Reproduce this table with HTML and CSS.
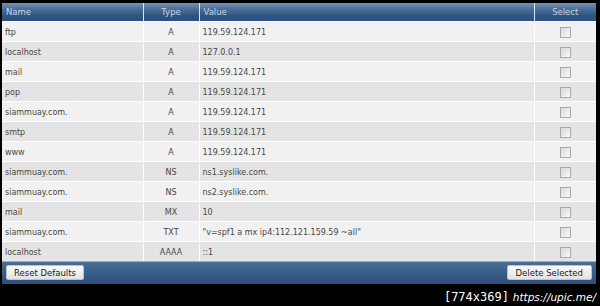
FILE: index.html
```html
<!DOCTYPE html>
<html>
<head>
<meta charset="utf-8">
<link rel="stylesheet" href="styles.css">
</head>
<body>
<div class="frame">
  <table class="dns">
    <colgroup>
      <col class="c-name"><col class="c-type"><col class="c-value"><col class="c-select">
    </colgroup>
    <thead>
      <tr><th class="left">Name</th><th>Type</th><th class="left">Value</th><th>Select</th></tr>
    </thead>
    <tbody>
      <tr><td>ftp</td><td class="ctr">A</td><td>119.59.124.171</td><td class="ctr"><span class="cb"></span></td></tr>
      <tr><td>localhost</td><td class="ctr">A</td><td>127.0.0.1</td><td class="ctr"><span class="cb"></span></td></tr>
      <tr><td>mail</td><td class="ctr">A</td><td>119.59.124.171</td><td class="ctr"><span class="cb"></span></td></tr>
      <tr><td>pop</td><td class="ctr">A</td><td>119.59.124.171</td><td class="ctr"><span class="cb"></span></td></tr>
      <tr><td>siammuay.com.</td><td class="ctr">A</td><td>119.59.124.171</td><td class="ctr"><span class="cb"></span></td></tr>
      <tr><td>smtp</td><td class="ctr">A</td><td>119.59.124.171</td><td class="ctr"><span class="cb"></span></td></tr>
      <tr><td>www</td><td class="ctr">A</td><td>119.59.124.171</td><td class="ctr"><span class="cb"></span></td></tr>
      <tr><td>siammuay.com.</td><td class="ctr">NS</td><td>ns1.syslike.com.</td><td class="ctr"><span class="cb"></span></td></tr>
      <tr><td>siammuay.com.</td><td class="ctr">NS</td><td>ns2.syslike.com.</td><td class="ctr"><span class="cb"></span></td></tr>
      <tr><td>mail</td><td class="ctr">MX</td><td>10</td><td class="ctr"><span class="cb"></span></td></tr>
      <tr><td>siammuay.com.</td><td class="ctr">TXT</td><td>"v=spf1 a mx ip4:112.121.159.59 ~all"</td><td class="ctr"><span class="cb"></span></td></tr>
      <tr><td>localhost</td><td class="ctr">AAAA</td><td>::1</td><td class="ctr"><span class="cb"></span></td></tr>
    </tbody>
  </table>
  <div class="footer">
    <button class="btn">Reset Defaults</button>
    <button class="btn">Delete Selected</button>
  </div>
  <div class="mark"><span class="dim">[774x369]</span> <span class="url">https://upic.me/</span></div>
</div>
</body>
</html>
```
FILE: styles.css
```css
html, body {
  margin: 0;
  padding: 0;
  background: #000;
}
.frame {
  width: 594px;
  padding: 3px 4px 0 2px;
  font-family: "DejaVu Sans", Verdana, sans-serif;
  font-size: 8px;
}
.dns {
  width: 594px;
  border-collapse: collapse;
  table-layout: fixed;
}
.c-name { width: 141px; }
.c-type { width: 56px; }
.c-value { width: 335px; }
.c-select { width: 62px; }
.dns th {
  height: 18px;
  padding: 0 4px;
  font-weight: normal;
  font-size: 8.5px;
  color: #c9d5e3;
  background: linear-gradient(#7592b5 0%, #4b6e97 35%, #2e5583 70%, #2a507e 100%);
  border-left: 1px solid #dfe6ee;
  text-align: center;
}
.dns th:first-child { border-left: none; }
.dns th.left { text-align: left; }
.dns td {
  height: 18px;
  padding: 1px 0 0 3px;
  color: #474747;
  border-left: 1px solid #fff;
  border-top: 1px solid #fff;
  white-space: nowrap;
}
.dns td:first-child { border-left: none; }
.dns td.ctr { text-align: center; padding: 1px 0 0 0; }
.dns tbody tr:nth-child(odd) td { background: #f1f1f1; }
.dns tbody tr:nth-child(even) td { background: #e4e4e4; }
.cb {
  display: inline-block;
  width: 9px;
  height: 9px;
  vertical-align: middle;
  border: 1px solid #a9a9a9;
  background: linear-gradient(135deg, #d8d8d8, #fafafa);
}
.footer {
  height: 21px;
  display: flex;
  justify-content: space-between;
  align-items: center;
  padding: 0 4px 1px 4px;
  border-top: 1px solid #8fb0d0;
  background: linear-gradient(#4a6d95, #365a84 60%, #2c4f79);
}
.btn {
  font-family: "DejaVu Sans", Verdana, sans-serif;
  font-size: 8.5px;
  color: #222;
  height: 15px;
  padding: 0 7px;
  border: 1px solid #b9c3cc;
  border-radius: 2px;
  background: linear-gradient(#fbfbfb, #e2e2e2);
}
.btn:last-child { padding: 0 8px; }
.mark {
  text-align: right;
  color: #fff;
  padding-top: 6px;
  font-size: 12px;
  line-height: 14px;
}
.dim { font-family: "DejaVu Sans Mono", monospace; font-weight: 300; }
.url { font-family: "DejaVu Sans", sans-serif; font-style: italic; font-size: 10.5px; }
```
